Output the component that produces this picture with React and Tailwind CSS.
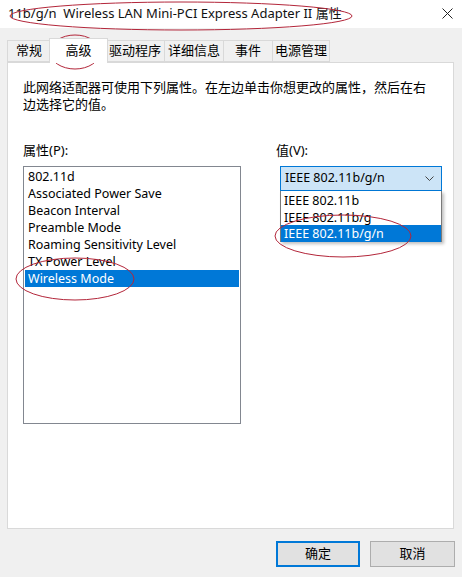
import React from "react";

const font = { fontFamily: '"Noto Sans", "Noto Sans CJK SC", sans-serif' };

function Tab({ label, w, active }) {
  if (active) {
    return (
      <div
        className="relative z-10 -mx-[2px] mt-[-2px] flex h-[25px] items-center justify-center border border-b-0 border-[#d9d9d9] bg-white text-[13px] text-black"
        style={{ width: w + 4 }}
      >
        {label}
      </div>
    );
  }
  return (
    <div
      className="-ml-px flex h-[22px] items-center justify-center border border-[#d9d9d9] bg-[#f0f0f0] text-[13px] text-black first:ml-0"
      style={{ width: w }}
    >
      {label}
    </div>
  );
}

export default function App() {
  const props = [
    "802.11d",
    "Associated Power Save",
    "Beacon Interval",
    "Preamble Mode",
    "Roaming Sensitivity Level",
    "TX Power Level",
    "Wireless Mode",
  ];
  const vals = ["IEEE 802.11b", "IEEE 802.11b/g", "IEEE 802.11b/g/n"];
  return (
    <div className="relative h-[577px] w-[462px] overflow-hidden bg-[#f0f0f0]" style={font}>
      {/* title bar */}
      <div className="flex h-[28px] items-center justify-between bg-white pl-[8px] pr-[9px]">
        <span className="text-[13px] text-[#111]">11b/g/n&nbsp; Wireless LAN Mini-PCI Express Adapter II 属性</span>
        <svg width="11" height="11" viewBox="0 0 11 11" className="mt-[-2px]">
          <path d="M0.5 0.5 L10.5 10.5 M10.5 0.5 L0.5 10.5" stroke="#222" strokeWidth="1" />
        </svg>
      </div>

      {/* tabs */}
      <div className="ml-[7px] mt-[12px] flex items-start">
        <Tab label="常规" w={44} />
        <Tab label="高级" w={55} active />
        <Tab label="驱动程序" w={60} />
        <Tab label="详细信息" w={60} />
        <Tab label="事件" w={50} />
        <Tab label="电源管理" w={58} />
      </div>

      {/* panel */}
      <div className="mx-[7px] -mt-px h-[467px] w-[447px] border border-[#d9d9d9] bg-white pl-[15px] pt-[16px]">
        <p className="text-[13px] leading-[17px] text-black">
          此网络适配器可使用下列属性。在左边单击你想更改的属性，然后在右
          <br />
          边选择它的值。
        </p>
        <div className="mt-[29px] flex">
          <div className="w-[218px]">
            <div className="text-[13px] leading-[17px]">属性(P):</div>
            <div className="mt-[7px] h-[258px] w-[218px] border border-[#828790] bg-white px-px pt-px">
              {props.map((p) => (
                <div
                  key={p}
                  className={
                    "h-[17px] pl-[3px] text-[12.5px] leading-[17px] " +
                    (p === "Wireless Mode" ? "bg-[#0078d7] text-white" : "text-black")
                  }
                >
                  {p}
                </div>
              ))}
            </div>
          </div>
          <div className="ml-[35px] w-[166px]">
            <div className="text-[13px] leading-[17px]">值(V):</div>
            <div className="relative ml-[4px] mt-[7px]">
              <div className="flex h-[25px] w-[162px] items-center justify-between border border-[#0078d7] bg-[#cce4f7] pl-[4px] pr-[7px] text-[12.5px]">
                <span>IEEE 802.11b/g/n</span>
                <svg width="9" height="6" viewBox="0 0 9 6">
                  <path d="M0.5 0.5 L4.5 4.5 L8.5 0.5" stroke="#444" strokeWidth="1" fill="none" />
                </svg>
              </div>
              <div className="absolute left-0 top-[25px] h-[51px] w-[162px] border border-t-0 border-[#7a7a7a] bg-white pt-px shadow-[2px_2px_3px_rgba(0,0,0,0.25)]">
                {vals.map((v) => (
                  <div
                    key={v}
                    className={
                      "h-[16.5px] pl-[3px] text-[12.5px] leading-[17px] " +
                      (v === "IEEE 802.11b/g/n" ? "bg-[#0078d7] text-white" : "text-black")
                    }
                  >
                    {v}
                  </div>
                ))}
              </div>
            </div>
          </div>
        </div>
      </div>

      {/* buttons */}
      <div className="mt-[12px] flex justify-end gap-[10px] pr-[7px]">
        <button className="flex h-[26px] w-[84px] items-center justify-center border-2 border-[#0078d7] bg-[#e1e1e1] text-[13px] text-black">
          确定
        </button>
        <button className="flex h-[26px] w-[85px] items-center justify-center border border-[#adadad] bg-[#e1e1e1] text-[13px] text-black">
          取消
        </button>
      </div>

      {/* red annotation ellipses */}
      <svg className="pointer-events-none absolute left-0 top-0" width="462" height="577">
        <g fill="none" stroke="#b3263a" strokeWidth="1">
          <ellipse cx="181" cy="16" rx="171" ry="14" />
          <ellipse cx="75" cy="52" rx="25" ry="17" />
          <ellipse cx="75" cy="279" rx="59" ry="21" />
          <ellipse cx="343" cy="236" rx="68" ry="21" />
        </g>
      </svg>
    </div>
  );
}
